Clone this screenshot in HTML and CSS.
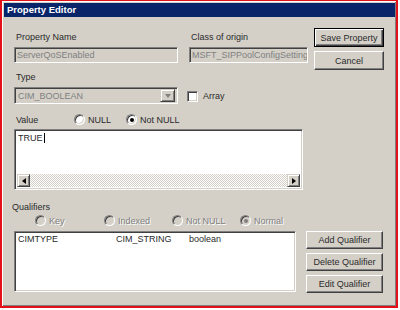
FILE: index.html
```html
<!DOCTYPE html>
<html>
<head>
<meta charset="utf-8">
<link rel="stylesheet" href="styles.css">
</head>
<body>
<div class="frame">
  <div class="window">
    <div class="titlebar">Property Editor</div>
    <div class="content">
      <div class="top">
        <div class="leftcol">
          <div class="fields">
            <div class="field w164">
              <div class="label">Property Name</div>
              <div class="input sunken disabled">ServerQoSEnabled</div>
            </div>
            <div class="field w119">
              <div class="label">Class of origin</div>
              <div class="input sunken disabled">MSFT_SIPPoolConfigSetting</div>
            </div>
          </div>
          <div class="label type-label">Type</div>
          <div class="typerow">
            <div class="combo sunken disabled">
              <span class="combo-text">CIM_BOOLEAN</span>
              <span class="combo-btn"><span class="tri-down"></span></span>
            </div>
            <div class="check"><span class="checkbox"></span><span>Array</span></div>
          </div>
          <div class="valuerow">
            <span class="value-label">Value</span>
            <span class="opt opt-null"><span class="radio"></span><span>NULL</span></span>
            <span class="opt"><span class="radio checked"></span><span>Not NULL</span></span>
          </div>
          <div class="textarea sunken">
            <div class="text">TRUE<span class="caret"></span></div>
            <div class="hscroll">
              <span class="sbtn"><span class="tri-left"></span></span>
              <span class="track"></span>
              <span class="sbtn"><span class="tri-right"></span></span>
            </div>
          </div>
        </div>
        <div class="btncol">
          <div class="btn default">Save Property</div>
          <div class="btn">Cancel</div>
        </div>
      </div>
      <div class="qual-label">Qualifiers</div>
      <div class="qual-radios">
        <span class="opt dis q1"><span class="radio"></span><span class="dtext">Key</span></span>
        <span class="opt dis q2"><span class="radio"></span><span class="dtext">Indexed</span></span>
        <span class="opt dis q3"><span class="radio"></span><span class="dtext">Not NULL</span></span>
        <span class="opt dis q4"><span class="radio checked"></span><span class="dtext">Normal</span></span>
      </div>
      <div class="bottom">
        <div class="listbox sunken">
          <div class="lrow"><span class="c1">CIMTYPE</span><span class="c2">CIM_STRING</span><span class="c3">boolean</span></div>
        </div>
        <div class="btncol2">
          <div class="btn">Add Qualifier</div>
          <div class="btn">Delete Qualifier</div>
          <div class="btn">Edit Qualifier</div>
        </div>
      </div>
    </div>
  </div>
</div>
</body>
</html>
```
FILE: styles.css
```css
* { box-sizing: border-box; }
html, body { margin: 0; padding: 0; background: #fff; }
body {
  font-family: "Liberation Sans", Arial, sans-serif;
  font-size: 9px;
  color: #2a2a2a;
}
.frame {
  width: 398px;
  height: 308px;
  border: 2px solid #e3121a;
  border-top-width: 1px;
}
.window {
  height: 100%;
  background: #d4d0c8;
  padding: 2px 1px 0 2px;
  box-shadow: inset 1px 1px #fff, inset -1px -1px #808080;
}
.titlebar {
  height: 14px;
  line-height: 14px;
  background: #0a246a;
  color: #fff;
  font-weight: bold;
  font-size: 9.5px;
  padding-left: 3px;
}
.content {
  padding: 11px 0 0 10px;
}
.top {
  display: flex;
  gap: 6px;
}
.leftcol {
  width: 294px;
  display: flex;
  flex-direction: column;
}
.fields {
  display: flex;
  gap: 11px;
  margin-top: 3px;
}
.field { display: flex; flex-direction: column; gap: 3px; }
.w164 { width: 164px; }
.w119 { width: 119px; }
.label {
  height: 13px;
  line-height: 13px;
  padding-left: 2px;
  white-space: nowrap;
}
.sunken {
  border: 1px solid;
  border-color: #808080 #fff #fff #808080;
  box-shadow: inset 1px 1px #404040, inset -1px -1px #d4d0c8;
}
.input {
  height: 16px;
  line-height: 14px;
  padding-left: 2px;
  white-space: nowrap;
  overflow: hidden;
}
.disabled {
  background: #d4d0c8;
  color: #808080;
}
.type-label { margin-top: 8px; }
.typerow {
  display: flex;
  align-items: center;
  margin-top: 3px;
}
.combo {
  width: 164px;
  height: 17px;
  display: flex;
  align-items: center;
  justify-content: space-between;
  padding: 2px;
}
.combo-text { padding-left: 1px; }
.combo-btn {
  width: 15px;
  height: 13px;
  background: #d4d0c8;
  border: 1px solid;
  border-color: #d4d0c8 #404040 #404040 #d4d0c8;
  box-shadow: inset 1px 1px #fff, inset -1px -1px #808080;
  display: flex;
  align-items: center;
  justify-content: center;
}
.tri-down {
  width: 0; height: 0;
  border-left: 3.5px solid transparent;
  border-right: 3.5px solid transparent;
  border-top: 4px solid #808080;
}
.check {
  display: flex;
  align-items: center;
  gap: 5px;
  margin-left: 9px;
  margin-top: 1px;
}
.checkbox {
  width: 11px;
  height: 11px;
  background: #fff;
  border: 1px solid;
  border-color: #808080 #fff #fff #808080;
  box-shadow: inset 1px 1px #404040, inset -1px -1px #d4d0c8;
}
.valuerow {
  display: flex;
  align-items: center;
  height: 13px;
  margin-top: 9px;
}
.value-label { width: 60px; padding-left: 2px; }
.opt {
  display: flex;
  align-items: center;
  gap: 3px;
  white-space: nowrap;
}
.opt-null { width: 52px; }
.radio {
  width: 11px;
  height: 11px;
  border-radius: 50%;
  background: #fff;
  border: 1px solid;
  border-color: #808080 #fff #fff #808080;
  box-shadow: inset 1px 1px #404040, inset -1px -1px #d4d0c8;
  display: flex;
  align-items: center;
  justify-content: center;
  flex: none;
}
.radio.checked::after {
  content: "";
  width: 4px;
  height: 4px;
  border-radius: 50%;
  background: #000;
}
.textarea {
  width: 289px;
  height: 61px;
  margin-top: 3px;
  background: #fff;
  padding: 2px;
  display: flex;
  flex-direction: column;
  justify-content: space-between;
}
.text {
  line-height: 12px;
  padding-left: 1px;
  display: flex;
  align-items: center;
}
.caret {
  width: 1px;
  height: 10px;
  background: #000;
  margin-left: 1px;
}
.hscroll {
  height: 13px;
  display: flex;
}
.sbtn {
  width: 13px;
  height: 13px;
  background: #d4d0c8;
  border: 1px solid;
  border-color: #d4d0c8 #404040 #404040 #d4d0c8;
  box-shadow: inset 1px 1px #fff, inset -1px -1px #808080;
  display: flex;
  align-items: center;
  justify-content: center;
  flex: none;
}
.track {
  flex: 1;
  background: repeating-conic-gradient(#fff 0 25%, #d4d0c8 0 50%) 0 0 / 2px 2px;
}
.tri-left {
  width: 0; height: 0;
  border-top: 3.5px solid transparent;
  border-bottom: 3.5px solid transparent;
  border-right: 4px solid #000;
}
.tri-right {
  width: 0; height: 0;
  border-top: 3.5px solid transparent;
  border-bottom: 3.5px solid transparent;
  border-left: 4px solid #000;
}
.btncol {
  width: 70px;
  display: flex;
  flex-direction: column;
  gap: 4px;
}
.btn {
  height: 19px;
  background: #d4d0c8;
  border: 1px solid;
  border-color: #fff #404040 #404040 #fff;
  box-shadow: inset -1px -1px #808080;
  display: flex;
  align-items: center;
  justify-content: center;
  white-space: nowrap;
}
.btn.default {
  border-color: #000;
  box-shadow: inset 1px 1px #fff, inset -1px -1px #404040, inset -2px -2px #808080;
}
.qual-label {
  height: 13px;
  line-height: 13px;
  margin-top: 11px;
  margin-left: -2px;
}
.qual-radios {
  display: flex;
  height: 13px;
  align-items: center;
  padding-left: 21px;
}
.q1 { width: 69px; }
.q2, .q3 { width: 68px; }
.dis .radio {
  background: #d4d0c8;
}
.dis .radio.checked::after { background: #808080; }
.dtext {
  color: #808080;
  text-shadow: 1px 1px #fff;
}
.bottom {
  display: flex;
  gap: 10px;
  margin-top: 4px;
}
.listbox {
  width: 282px;
  height: 61px;
  background: #fff;
  padding: 2px 2px 2px 3px;
}
.lrow {
  display: flex;
  line-height: 11px;
  white-space: nowrap;
}
.c1 { width: 98px; }
.c2 { width: 73px; }
.btncol2 {
  width: 77px;
  display: flex;
  flex-direction: column;
  gap: 4px;
}
.btncol2 .btn { height: 18px; }
```
